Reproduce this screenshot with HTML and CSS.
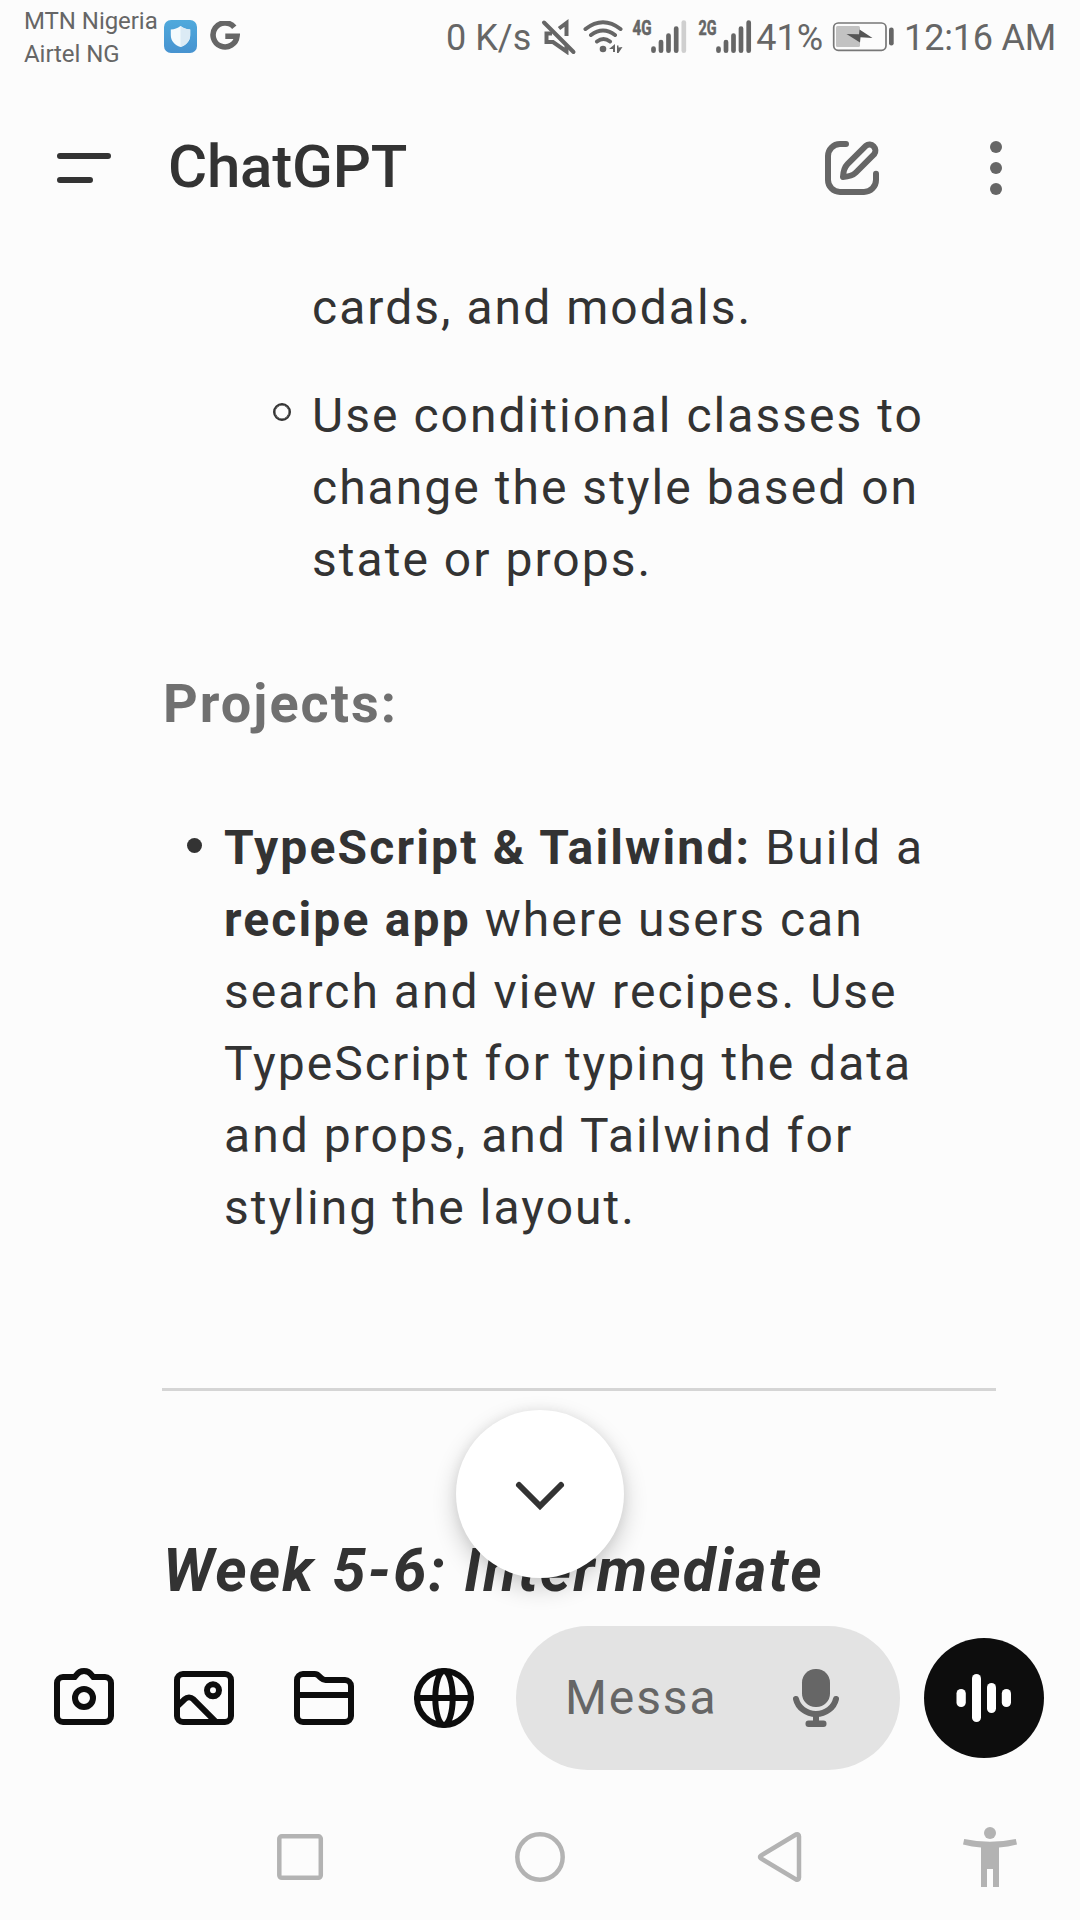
FILE: index.html
```html
<!DOCTYPE html>
<html lang="en">
<head>
<meta charset="utf-8">
<title>ChatGPT</title>
<link rel="stylesheet" href="styles.css">
</head>
<body>
<div class="status-bar">
  <div class="carriers"><span>MTN Nigeria</span><span>Airtel NG</span></div>
  <svg class="shield" width="33" height="33" viewBox="0 0 33 33">
    <defs><linearGradient id="tile" x1="0" y1="0" x2="0" y2="1"><stop offset="0" stop-color="#4fa9dc"/><stop offset="1" stop-color="#4793d0"/></linearGradient></defs>
    <rect width="33" height="33" rx="7" fill="url(#tile)"/>
    <path d="M16.5 6C13.5 8.3 10.5 9.3 6.8 9.5V15c0 6 4 10 9.700 12 5.700-2 9.700-6 9.700-12V9.500C22.500 9.300 19.500 8.300 16.500 6z" fill="#f4fafd"/>
    <path d="M16.500 6v21c5.700-2 9.700-6 9.700-12V9.500C22.500 9.300 19.500 8.300 16.500 6z" fill="#dcebf5"/>
  </svg>
  <svg class="google" width="30" height="30" viewBox="0 0 30 30"><path d="M24.300 6.300A12 12 0 1 0 27 15.200H15.300" fill="none" stroke="#666" stroke-width="5.600"/></svg>
  <div class="status-right">
    <span class="speed">0 K/s</span>
    <svg class="mute" width="36" height="36" viewBox="541 18 36 36" fill="none" stroke="#666" stroke-width="4">
      <path d="M552 32.500h-5.500v8.500h6.500l13.500 9.500V45M559 27.500l7.500-5.500v13"/><path d="M544 21.500 573.500 51" stroke-linecap="round"/>
    </svg>
    <svg class="wifi" width="42" height="36" viewBox="583 18 42 36" fill="none" stroke="#666" stroke-width="4" stroke-linecap="round">
      <path d="M585.500 28q17.500-13.500 35 0M591 34q12-9 24 0M597 40.500q6.500-5 13 0"/><circle cx="603" cy="48" r="3.300" fill="#666" stroke="none"/>
      <path d="M615 43v8h-2v-3h-4zM617 44.500h1.500v2l4-.500-4 6H617z" fill="#666" stroke="none"/>
    </svg>
    <svg class="signal" width="56" height="36" viewBox="632 18 56 36" stroke="#666" stroke-width="4.700" stroke-linecap="round">
      <text class="net" x="632.500" y="34" textLength="19" lengthAdjust="spacingAndGlyphs">4G</text>
      <path d="M653.500 47.500v2.200M661 41v8.700M668.500 34.500v15.200M676.200 27.500v22.200"/><path d="M683.800 21.500v28.200" stroke="#cfcfcf"/>
    </svg>
    <svg class="signal second" width="56" height="36" viewBox="698 18 56 36" stroke="#666" stroke-width="4.700" stroke-linecap="round">
      <text class="net" x="698.500" y="34" textLength="18" lengthAdjust="spacingAndGlyphs">2G</text>
      <path d="M718.500 47.500v2.200M726 41v8.700M733.500 34.500v15.200M741 27.500v22.200M748.700 21.500v28.200"/>
    </svg>
    <span class="percent">41%</span>
    <svg class="battery" width="62" height="32" viewBox="832 21 62 32">
      <rect x="833.700" y="23" width="52.300" height="27.300" rx="4.500" fill="none" stroke="#777" stroke-width="1.700"/>
      <rect x="836" y="26" width="24" height="21" rx="1.500" fill="#c2c2c2"/>
      <path d="M846.500 34l12.500.3 .5-4.800 13 8.500-12-.7-.5 5.200z" fill="#555"/>
      <rect x="889" y="27.500" width="4.700" height="18" rx="2.300" fill="#666"/>
    </svg>
    <span class="clock">12:16 AM</span>
  </div>
</div>

<header class="app-bar">
  <svg class="icon" viewBox="0 0 24 24"><path d="M4 8h16M4 16h10"/></svg>
  <h1>ChatGPT</h1>
  <svg class="icon muted" viewBox="0 0 24 24"><path d="M10 4H8a4 4 0 0 0-4 4v8a4 4 0 0 0 4 4h8a4 4 0 0 0 4-4v-2.100"/><path d="M16.600 4.600 10.500 10.700C9.400 11.800 9.100 12.900 9 15c2.100-.1 3.200-.4 4.300-1.500l6.100-6.100a2 2 0 0 0-2.800-2.800z" stroke-linejoin="round"/></svg>
  <svg class="icon more" viewBox="0 0 24 24"><circle cx="12" cy="5" r="2"/><circle cx="12" cy="12" r="2"/><circle cx="12" cy="19" r="2"/></svg>
</header>

<main class="message">
  <ul class="sublist">
    <li>cards, and modals.</li>
    <li><i class="ring"></i>Use conditional classes to<br>change the style based on<br>state or props.</li>
  </ul>
  <h3>Projects:</h3>
  <ul class="list">
    <li><i class="dot"></i><b>TypeScript &amp; Tailwind:</b> Build a<br><b>recipe app</b> where users can<br>search and view recipes. Use<br>TypeScript for typing the data<br>and props, and Tailwind for<br>styling the layout.</li>
  </ul>
  <hr>
  <h2>Week 5-6: Intermediate</h2>
  <button class="to-bottom" aria-label="Scroll to bottom"><svg width="72" height="72" viewBox="0 0 24 24"><path d="m5 9 7 7 7-7"/></svg></button>
</main>

<section class="composer">
  <svg class="icon tool" viewBox="0 0 24 24"><path d="M5 5h3.900l.6-.7C10.100 3.400 11 3 12 3s1.900.4 2.500 1.300l.6.700H19a2 2 0 0 1 2 2v11a2 2 0 0 1-2 2H5a2 2 0 0 1-2-2V7a2 2 0 0 1 2-2z"/><circle cx="12" cy="12" r="3"/></svg>
  <svg class="icon tool" viewBox="0 0 24 24"><rect x="3" y="4" width="18" height="16" rx="2"/><circle cx="15" cy="9.450" r="2"/><path d="M3 14.900l2.600-2.500a2 2 0 0 1 2.800 0L15.700 19.700" stroke-linecap="butt"/></svg>
  <svg class="icon tool" viewBox="0 0 24 24"><path d="M5 4h3.900c.5 0 1 .2 1.300.6l.9.800c.4.400.8.600 1.400.600H19a2 2 0 0 1 2 2v10a2 2 0 0 1-2 2H5a2 2 0 0 1-2-2V6a2 2 0 0 1 2-2zM3 11h18"/></svg>
  <svg class="icon tool" viewBox="0 0 24 24"><circle cx="12" cy="12" r="9"/><ellipse cx="12" cy="12" rx="2.900" ry="9"/><path d="M3 12h18"/></svg>
  <div class="field">
    <span class="placeholder">Messa</span>
    <svg width="48" height="60" viewBox="792 1668 48 60" fill="#666">
      <rect x="802" y="1669" width="28" height="38" rx="13.500"/>
      <path d="M796 1699c2 8.500 10 15 20 15s18-6.500 20-15" fill="none" stroke="#666" stroke-width="6" stroke-linecap="round"/>
      <rect x="813" y="1714" width="6" height="9"/><rect x="805.500" y="1720.500" width="21" height="6.500" rx="3"/>
    </svg>
  </div>
  <button class="voice" aria-label="Voice mode"><svg width="60" height="60" viewBox="954 1668 60 60" fill="#fff">
    <rect x="956.500" y="1689" width="9.300" height="18" rx="4.600"/><rect x="972" y="1674" width="9" height="48" rx="4.500"/><rect x="987" y="1683" width="9" height="30" rx="4.500"/><rect x="1001.800" y="1689" width="9.200" height="18" rx="4.600"/>
  </svg></button>
</section>

<nav class="nav-bar">
  <svg width="60" height="60" viewBox="270 1827 60 60"><rect x="279.300" y="1836.300" width="41.500" height="41.500" rx="2.500"/></svg>
  <svg width="60" height="60" viewBox="510 1827 60 60"><circle cx="540" cy="1857" r="22.700"/></svg>
  <svg width="60" height="60" viewBox="750 1827 60 60"><path d="M796 1834.500 761 1855.500q-2 1.500 0 3L796 1879.500q3 1 3-2V1836.500q0-3-3-2z"/></svg>
  <svg class="person" width="60" height="60" viewBox="960 1827 60 60"><circle cx="990" cy="1833" r="6"/><path d="M964.200 1839q25.800 5.500 51.600 0l1.200 5.500q-9 2.300-18 3V1887h-6v-18h-6v18h-6v-39.500q-9-.7-18-3z"/></svg>
</nav>
</body>
</html>
```
FILE: styles.css
```css
* { box-sizing: border-box; margin: 0; padding: 0; }
body {
  width: 1080px; height: 1920px; overflow: hidden;
  display: flex; flex-direction: column;
  background: #fcfcfc; color: #333;
  font-family: Roboto, "Liberation Sans", sans-serif;
}
svg { display: block; flex: none; }
button { border: 0; display: flex; align-items: center; justify-content: center; }

.status-bar { height: 72px; display: flex; align-items: center; padding: 0 24px; color: #666; white-space: nowrap; }
.carriers { display: flex; flex-direction: column; font-size: 24px; line-height: 33px; letter-spacing: -.05px; width: 140px; padding-top: 4px; }
.shield { margin-top: 1px; }
.google { margin-left: 13px; }
.status-right { margin-left: auto; display: flex; align-items: center; font-size: 36px; padding-top: 4px; }
.status-right svg { margin-top: -3px; }
.mute { margin-left: 10px; }
.wifi { margin-left: 6px; }
.signal { margin-left: 7px; overflow: visible; }
.signal.second { margin-left: 10px; }
.net { font: 700 21px Roboto, sans-serif; fill: #666; stroke: #666; stroke-width: .6px; }
.percent { margin-left: 2px; }
.battery { margin-left: 9px; }
.clock { margin-left: 10px; letter-spacing: -.2px; }

.app-bar { height: 192px; display: flex; align-items: center; padding: 0 48px; }
.icon { width: 72px; height: 72px; fill: none; stroke: #333; stroke-width: 2; stroke-linecap: round; }
.icon.muted { stroke: #666; margin-left: auto; }
.icon.more { stroke: none; fill: #666; margin-left: 72px; }
h1 { font-size: 60px; font-weight: 500; line-height: 72px; letter-spacing: -.2px; margin: -2px 0 0 48px; }

.message {
  position: relative; height: 1362px; padding: 8px 84px 0 162px;
  font-size: 48px; line-height: 72px; letter-spacing: 2.03px; white-space: nowrap;
}
ul { list-style: none; }
li { position: relative; }
b { letter-spacing: 2.150px; }
.sublist { display: grid; gap: 36px; padding-left: 150px; }
.list { padding-left: 62px; }
.ring, .dot { position: absolute; border-radius: 50%; }
.ring { width: 18px; height: 18px; border: 2px solid #333; box-shadow: inset 0 0 0 .5px #333; left: -39px; top: 23px; }
.dot { width: 15px; height: 15px; background: #333; left: -37px; top: 26px; }
h3 { font-size: 54px; color: #707070; margin: 72px 0 72px; padding-left: 1px; line-height: 72px; }
hr { border: 0; height: 3px; background: #d5d5d5; margin: 144px 0; }
h2 { font-size: 60px; font-style: italic; line-height: 72px; padding-left: 1px; letter-spacing: 2.120px; }
.to-bottom {
  position: absolute; left: 456px; top: 1146px; width: 168px; height: 168px; border-radius: 50%; background: #fff;
  box-shadow: 0 9px 24px rgba(0, 0, 0, .2), 0 0 12px rgba(0, 0, 0, .06);
}
.to-bottom path { fill: none; stroke: #333; stroke-width: 2; stroke-linecap: round; }

.composer { height: 144px; display: flex; align-items: center; padding: 0 36px 0 48px; }
.tool { stroke: #0d0d0d; margin-right: 48px; }
.tool:nth-of-type(4) { margin-right: 36px; }
.field { width: 384px; height: 144px; border-radius: 72px; background: #e3e3e3; display: flex; align-items: center; justify-content: space-between; padding: 0 60px 0 49px; }
.placeholder { font-size: 48px; letter-spacing: 1.9px; color: #666; margin-top: -2px; }
.voice { width: 120px; height: 120px; border-radius: 50%; background: #0d0d0d; margin-left: 24px; }

.nav-bar { height: 150px; display: flex; align-items: center; padding: 24px 60px 0 270px; gap: 180px; }
.nav-bar svg { fill: none; stroke: #b3b3b3; stroke-width: 4.500; }
.nav-bar .person { fill: #b3b3b3; stroke: none; margin-left: -30px; }
```
